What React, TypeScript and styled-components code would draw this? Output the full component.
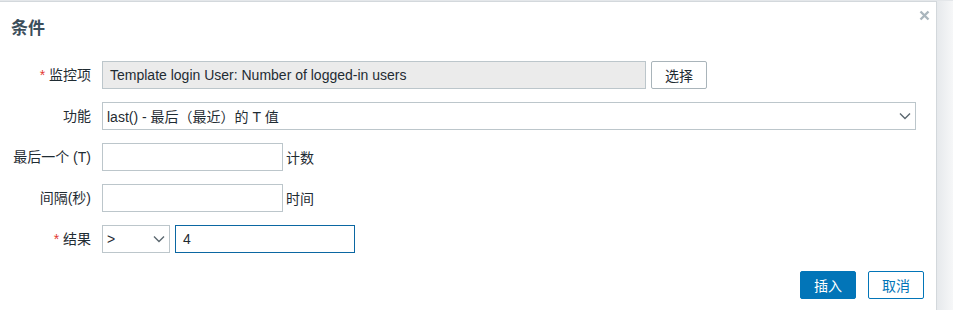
import React from 'react'
import styled, { createGlobalStyle } from 'styled-components'

const GlobalStyle = createGlobalStyle`
  html, body {
    margin: 0;
    padding: 0;
    background: #ffffff;
    font-family: 'Liberation Sans', 'Noto Sans CJK SC', Arial, sans-serif;
    font-size: 14px;
    color: #1f2c33;
  }
`

const Page = styled.div`
  width: 953px;
  height: 310px;
  overflow: hidden;
  display: flex;
  background: linear-gradient(to right, #ffffff 0, #ffffff 937px, #e6e9ec 937px, #f6f7f8 953px);
  border-top: 1px solid #e4e7ea;
  box-sizing: border-box;
`

const Dialog = styled.div`
  position: relative;
  width: 937px;
  height: 309px;
  box-sizing: border-box;
  background: #ffffff;
  border-top: 1px solid #d3d8dc;
  border-right: 1px solid #d3d8dc;
  display: flex;
  flex-direction: column;
`

const Title = styled.h4`
  margin: 0;
  padding: 17px 0 0 11px;
  height: 20px;
  font-size: 17px;
  font-weight: bold;
  color: #3b4e5b;
  line-height: 20px;
`

const Close = styled.button`
  position: absolute;
  top: 6px;
  right: 5px;
  width: 14px;
  height: 14px;
  padding: 0;
  border: 0;
  background: none;
  display: flex;
  align-items: center;
  justify-content: center;
`

const Form = styled.div`
  display: grid;
  grid-template-columns: 91px auto;
  column-gap: 11px;
  row-gap: 13px;
  padding-top: 22px;
`

const Label = styled.label<{ $required?: boolean }>`
  text-align: right;
  height: 28px;
  line-height: 28px;
  white-space: nowrap;
  &::before {
    content: ${(p) => (p.$required ? "'* '" : "''")};
    color: #e33734;
  }
`

const Field = styled.div`
  display: flex;
  align-items: center;
  gap: 5px;
  height: 28px;
`

const Unit = styled.span`
  margin-left: -2px;
`

const TextBox = styled.div<{ $width: number; $readonly?: boolean; $focus?: boolean }>`
  box-sizing: border-box;
  width: ${(p) => p.$width}px;
  height: 28px;
  line-height: 26px;
  padding: 0 7px;
  background: ${(p) => (p.$readonly ? '#ebebeb' : '#ffffff')};
  border: 1px solid ${(p) => (p.$focus ? '#0b67a2' : '#bcc6cb')};
  white-space: nowrap;
  overflow: hidden;
`

const Select = styled.div<{ $width: number }>`
  box-sizing: border-box;
  width: ${(p) => p.$width}px;
  height: 28px;
  padding: 0 4px 0 4px;
  border: 1px solid #bcc6cb;
  display: flex;
  align-items: center;
  justify-content: space-between;
  white-space: nowrap;
`

const Button = styled.button<{ $primary?: boolean; $outline?: boolean }>`
  box-sizing: border-box;
  height: 28px;
  padding: 0 13px;
  border-radius: 2px;
  font-family: inherit;
  font-size: 14px;
  cursor: pointer;
  background: ${(p) => (p.$primary ? '#0275b8' : '#ffffff')};
  color: ${(p) => (p.$primary ? '#ffffff' : p.$outline ? '#0275b8' : '#1f2c33')};
  border: 1px solid ${(p) => (p.$primary || p.$outline ? '#0275b8' : '#a9b4ba')};
`

const Footer = styled.div`
  display: flex;
  justify-content: flex-end;
  gap: 12px;
  padding: 18px 12px 0 0;
`

const Chevron = () => (
  <svg width="12" height="8" viewBox="0 0 12 8">
    <path d="M1 1.5 L6 6.5 L11 1.5" fill="none" stroke="#5c6870" strokeWidth="1.4" />
  </svg>
)

const CloseIcon = () => (
  <svg width="11" height="11" viewBox="0 0 11 11">
    <path d="M1.5 1.5 L9.5 9.5 M9.5 1.5 L1.5 9.5" stroke="#aab6bd" strokeWidth="2.4" />
  </svg>
)

export default function App() {
  return (
    <>
      <GlobalStyle />
      <Page>
        <Dialog>
          <Title>条件</Title>
          <Close aria-label="close">
            <CloseIcon />
          </Close>
          <Form>
            <Label $required>监控项</Label>
            <Field>
              <TextBox $width={544} $readonly>
                Template login User: Number of logged-in users
              </TextBox>
              <Button>选择</Button>
            </Field>

            <Label>功能</Label>
            <Field>
              <Select $width={814}>
                <span>last() - 最后（最近）的 T 值</span>
                <Chevron />
              </Select>
            </Field>

            <Label>最后一个 (T)</Label>
            <Field>
              <TextBox $width={181} />
              <Unit>计数</Unit>
            </Field>

            <Label>间隔(秒)</Label>
            <Field>
              <TextBox $width={181} />
              <Unit>时间</Unit>
            </Field>

            <Label $required>结果</Label>
            <Field>
              <Select $width={68}>
                <span>&gt;</span>
                <Chevron />
              </Select>
              <TextBox $width={180} $focus>
                4
              </TextBox>
            </Field>
          </Form>
          <Footer>
            <Button $primary>插入</Button>
            <Button $outline>取消</Button>
          </Footer>
        </Dialog>
      </Page>
    </>
  )
}
